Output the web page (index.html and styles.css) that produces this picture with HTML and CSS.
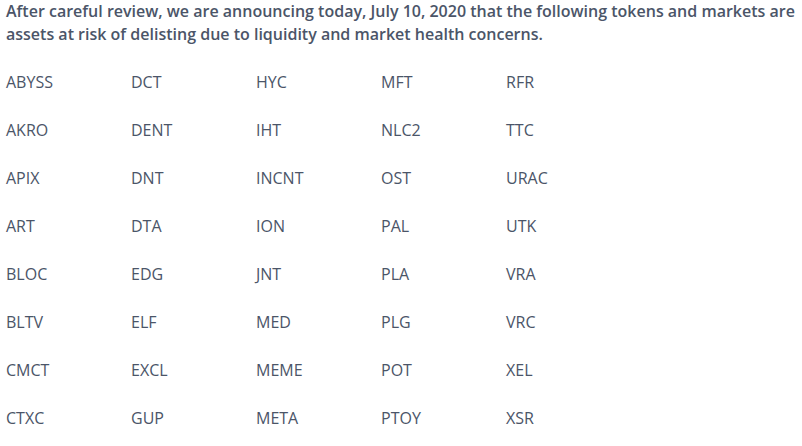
FILE: index.html
```html
<!DOCTYPE html>
<html>
<head>
<meta charset="utf-8">
<link rel="stylesheet" href="styles.css">
</head>
<body>
<div class="page">
  <p class="intro">After careful review, we are announcing today, July 10, 2020 that the following tokens and markets are assets at risk of delisting due to liquidity and market health concerns.</p>
  <div class="tokens">
    <span>ABYSS</span><span>DCT</span><span>HYC</span><span>MFT</span><span>RFR</span>
    <span>AKRO</span><span>DENT</span><span>IHT</span><span>NLC2</span><span>TTC</span>
    <span>APIX</span><span>DNT</span><span>INCNT</span><span>OST</span><span>URAC</span>
    <span>ART</span><span>DTA</span><span>ION</span><span>PAL</span><span>UTK</span>
    <span>BLOC</span><span>EDG</span><span>JNT</span><span>PLA</span><span>VRA</span>
    <span>BLTV</span><span>ELF</span><span>MED</span><span>PLG</span><span>VRC</span>
    <span>CMCT</span><span>EXCL</span><span>MEME</span><span>POT</span><span>XEL</span>
    <span>CTXC</span><span>GUP</span><span>META</span><span>PTOY</span><span>XSR</span>
  </div>
</div>
</body>
</html>
```
FILE: styles.css
```css
html, body {
  margin: 0;
  padding: 0;
  background: #ffffff;
}
.page {
  padding: 0 6px;
  font-family: "Open Sans", "Liberation Sans", sans-serif;
  color: #4b5568;
}
.intro {
  margin: 0;
  font-size: 16px;
  font-weight: 600;
  line-height: 23px;
}
.tokens {
  display: grid;
  grid-template-columns: repeat(5, 125px);
  grid-auto-rows: 48px;
  align-items: center;
  margin-top: 12px;
  font-size: 16px;
  line-height: 22px;
}
```
